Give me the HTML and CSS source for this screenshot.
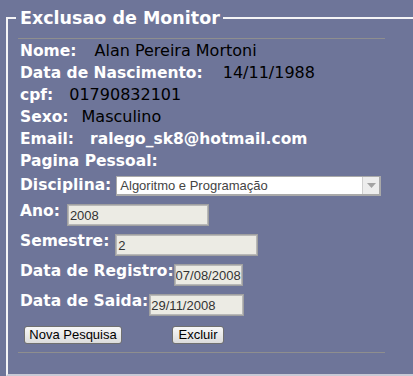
FILE: index.html
```html
<!DOCTYPE html>
<html lang="pt">
<head>
<meta charset="utf-8">
<title>Exclusao de Monitor</title>
<link rel="stylesheet" href="styles.css">
</head>
<body>
<form class="panel">
  <fieldset class="box">
    <legend class="box-title">Exclusao de Monitor</legend>
    <div class="rule"></div>
    <div class="info-row"><span class="lbl">Nome:</span><span class="val val-nome">Alan Pereira Mortoni</span></div>
    <div class="info-row"><span class="lbl">Data de Nascimento:</span><span class="val val-nasc">14/11/1988</span></div>
    <div class="info-row"><span class="lbl">cpf:</span><span class="val val-cpf">01790832101</span></div>
    <div class="info-row"><span class="lbl">Sexo:</span><span class="val val-sexo">Masculino</span></div>
    <div class="info-row"><span class="lbl">Email:</span><span class="lbl val-email">ralego_sk8@hotmail.com</span></div>
    <div class="info-row"><span class="lbl">Pagina Pessoal:</span></div>
    <div class="pick-row">
      <span class="lbl">Disciplina:</span>
      <div class="pick">
        <span class="pick-text">Algoritmo e Programação</span>
        <span class="pick-arrow"><svg width="9" height="5" viewBox="0 0 9 5"><path d="M0 0h9L4.5 5z" fill="#a3a3a3"/></svg></span>
      </div>
    </div>
    <div class="field-row"><label class="lbl" for="ano">Ano:</label><input id="ano" class="inp inp-ano" value="2008" readonly></div>
    <div class="field-row"><label class="lbl" for="sem">Semestre:</label><input id="sem" class="inp inp-sem" value="2" readonly></div>
    <div class="field-row"><label class="lbl" for="reg">Data de Registro:</label><input id="reg" class="inp inp-reg" value="07/08/2008" readonly></div>
    <div class="field-row"><label class="lbl" for="sai">Data de Saida:</label><input id="sai" class="inp inp-sai" value="29/11/2008" readonly></div>
    <div class="btn-row">
      <button type="button" class="btn btn-new">Nova Pesquisa</button>
      <button type="button" class="btn btn-del">Excluir</button>
    </div>
    <div class="rule rule-bottom"></div>
  </fieldset>
</form>
</body>
</html>
```

FILE: styles.css
```css
html, body {
  margin: 0;
  padding: 0;
  background: #6e7599;
  overflow: hidden;
}
body {
  font-family: "DejaVu Sans", Verdana, sans-serif;
}
.panel {
  margin: 0;
}
.box {
  margin: 8px 0 0 6px;
  width: 440px;
  min-width: 0;
  border: 2px solid #f4f4f6;
  border-bottom-color: #c8cad6;
  padding: 10px 0 21px 12px;
  box-sizing: border-box;
}
.box-title {
  margin-left: -4px;
  padding: 0 3px 0 4px;
  font-weight: bold;
  font-size: 17.5px;
  line-height: 20px;
  color: #fff;
}
.rule {
  width: 367px;
  height: 1px;
  background: #8e8e8e;
  margin: 0 0 1px -2px;
}
.rule-bottom {
  margin: 8px 0 0 -2px;
}
.lbl {
  font-weight: bold;
  font-size: 15.5px;
  line-height: 22px;
  color: #fff;
  white-space: nowrap;
}
.val {
  font-size: 16px;
  line-height: 22px;
  color: #000;
  white-space: nowrap;
}
.info-row {
  display: flex;
  height: 22px;
}
.val-nome { margin-left: 18px; }
.val-nasc { margin-left: 20px; }
.val-cpf { margin-left: 16px; }
.val-sexo { margin-left: 13px; }
.val-email { margin-left: 16px; }

.pick-row {
  display: flex;
  align-items: flex-start;
  height: 26px;
}
.pick-row .lbl {
  padding-top: 2px;
}
.pick {
  margin: 4px 0 0 5px;
  width: 265px;
  height: 20px;
  box-sizing: border-box;
  border: 1px solid #a9a9a9;
  border-right-width: 2px;
  border-bottom-width: 2px;
  background: #fff;
  display: flex;
  align-items: center;
}
.pick-text {
  flex: 1;
  padding-left: 3px;
  font-family: "Liberation Sans", Arial, sans-serif;
  font-size: 13px;
  color: #444;
  white-space: nowrap;
}
.pick-arrow {
  width: 16px;
  align-self: stretch;
  background: #ededed;
  border-left: 1px solid #cfcfcf;
  display: flex;
  align-items: center;
  justify-content: center;
}

.field-row {
  display: flex;
  align-items: flex-start;
  height: 30px;
}
.field-row .lbl {
  padding-top: 2px;
}
.inp {
  margin: 6px 0 0 6px;
  height: 22px;
  box-sizing: border-box;
  border: 1px solid #a0a0a0;
  box-shadow: inset 0 0 0 1px #b8b8b8;
  background: #ecebe4;
  font-family: "Liberation Sans", Arial, sans-serif;
  font-size: 13px;
  color: #333;
  padding: 0 0 0 2px;
  outline: none;
}
.inp-ano { width: 142px; margin-left: 7px; }
.inp-sem { width: 143px; }
.inp-reg { width: 69px; margin-left: 0; padding-left: 1px; }
.inp-sai { width: 95px; margin-left: 1px; padding-left: 1px; }

.btn-row {
  display: flex;
  align-items: flex-start;
  height: 26px;
}
.btn {
  margin-top: 8px;
  height: 18px;
  box-sizing: border-box;
  border: 1px solid #707070;
  border-radius: 3px;
  background: linear-gradient(#f7f7f7, #dcdcdc);
  font-family: "Liberation Sans", Arial, sans-serif;
  font-size: 13px;
  color: #000;
  padding: 0 2px;
  line-height: 14px;
}
.btn-new {
  width: 98px;
  margin-left: 4px;
}
.btn-del {
  width: 52px;
  margin-left: 50px;
}
```
